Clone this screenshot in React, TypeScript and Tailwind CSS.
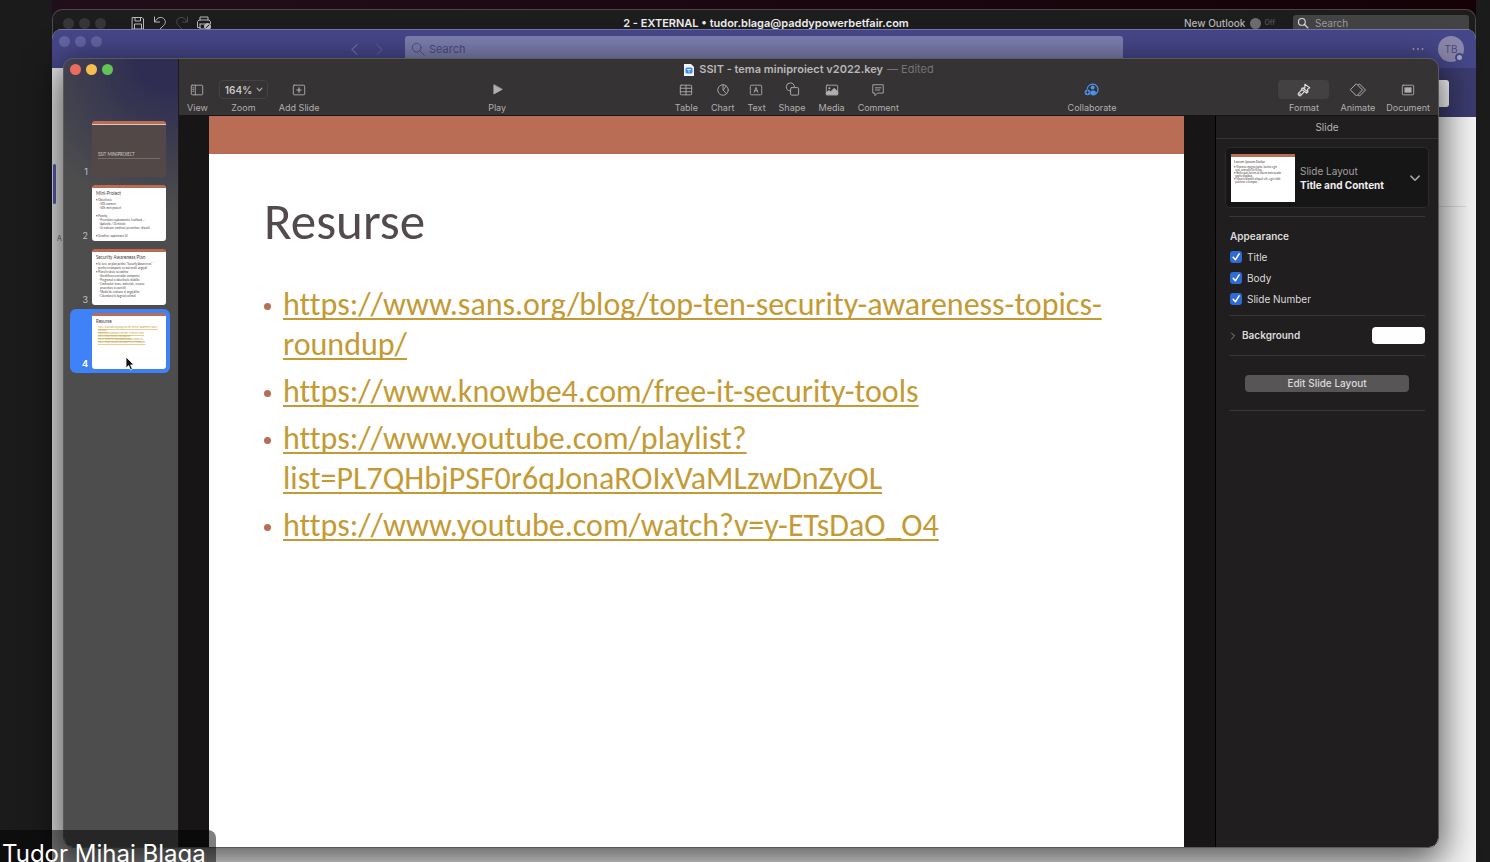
import type { ReactNode } from 'react';

const UI = "font-['Inter','Liberation_Sans',sans-serif]";
const SLIDE = "font-['Carlito','Calibri','Lato',sans-serif] [font-variant-ligatures:none]";

function Svg({ children, className = 'size-4' }: { children: ReactNode; className?: string }) {
  return (
    <svg viewBox="0 0 16 16" fill="none" stroke="currentColor" strokeWidth="1" strokeLinecap="round" strokeLinejoin="round" className={className} aria-hidden="true">
      {children}
    </svg>
  );
}

function Dots({ colors }: { colors: string[] }) {
  return (
    <div className="flex gap-[5px]">
      {colors.map((c, i) => (
        <span key={i} className={`size-[11px] rounded-full ${c}`} />
      ))}
    </div>
  );
}

function OutlookWindow() {
  return (
    <section className="absolute top-[9px] right-[14px] bottom-0 left-[52px] rounded-t-[10px] border border-b-0 border-[#4a4a4a] bg-[#1d1d1d]">
      <div className="grid h-[26px] grid-cols-[1fr_auto_1fr] items-center pr-[6px] pl-[10px]">
        <div className="flex items-center gap-6">
          <Dots colors={['bg-[#373737]', 'bg-[#373737]', 'bg-[#373737]']} />
          <div className="flex items-center gap-[6px] text-[#b9b9b9]">
            <button aria-label="Save"><Svg><path d="M2.500 2.500h9.500l1.500 1.500v10h-11zM5 2.500v3.500h5.500v-3.500M4.500 14v-5h7v5" /></Svg></button>
            <button aria-label="Undo"><Svg><path d="M2.500 2v5h5M2.800 6.800c2.500-4.500 6-5.300 8.500-3.500s2.700 4.700.5 7l-4 4" /></Svg></button>
            <button aria-label="Redo" className="text-[#4c4c4c]"><Svg><path d="M13.500 2v5h-5M13.200 6.800c-2.500-4.500-6-5.300-8.500-3.500s-2.700 4.700-.5 7l4 4" /></Svg></button>
            <button aria-label="Print"><Svg><path d="M4 5v-3h8v3M4 12.500h-2.500v-6l1.500-1.500h10l1.500 1.500v2M4 9h5M4 9v5h4" /><circle cx="11.500" cy="11.500" r="3.500" fill="currentColor" stroke="none" /><path d="M10 12.800l3-2.800" stroke="#1d1d1d" /></Svg></button>
          </div>
        </div>
        <h2 className="text-[11px] font-semibold text-[#ededed]">2 - EXTERNAL • tudor.blaga@paddypowerbetfair.com</h2>
        <div className="flex items-center justify-end">
          <span className="text-[10px] font-medium text-[#b4b4b4]">New Outlook</span>
          <button role="switch" aria-checked="false" aria-label="New Outlook" className="ml-[5px] flex items-center gap-[3px] text-[7px] font-semibold text-[#4f4f4f]">
            <span className="size-[11px] rounded-full bg-[#6d6d6d]" />Off
          </button>
          <label className="ml-[18px] flex h-[16px] w-[176px] items-center gap-[6px] rounded-[3px] bg-[#434343] px-1 text-[#dcdcdc]">
            <Svg className="size-3 shrink-0"><circle cx="6.500" cy="6.500" r="4.500" strokeWidth="1.500" /><path d="M10 10l4.500 4.500" strokeWidth="1.800" /></Svg>
            <input aria-label="Search mail" placeholder="Search" className="w-full min-w-0 bg-transparent text-[10px] placeholder:text-[#9b9b9b]" />
          </label>
        </div>
      </div>
    </section>
  );
}

function TeamsWindow() {
  return (
    <section className="absolute top-[29px] right-[14px] bottom-0 left-[52px] flex flex-col overflow-hidden rounded-t-[10px] bg-[#f5f5f5]">
      <header className="flex h-[39px] shrink-0 items-start border-t border-[#7576a8] bg-[#464789]">
        <div className="pt-[6px] pl-[7px]"><Dots colors={['bg-[#6465a3]', 'bg-[#6465a3]', 'bg-[#6465a3]']} /></div>
        <div className="ml-[245px] flex gap-2 pt-[11px]">
          <button aria-label="Back" className="text-[#8d8eb9]"><Svg><path d="M10 3.500l-5 5 5 5" /></Svg></button>
          <button aria-label="Forward" className="text-[#6a6ba4]"><Svg><path d="M6 3.500l5 5-5 5" /></Svg></button>
        </div>
        <label className="mt-[6px] ml-[18px] flex h-[26px] w-[718px] items-center gap-1 rounded-[3px] bg-[#7d7fb0] pl-[6px] text-[#4b4c82]">
          <Svg className="size-[14px] shrink-0"><circle cx="6.500" cy="6.500" r="5" /><path d="M10.300 10.300l5 5" /></Svg>
          <input aria-label="Search Teams" placeholder="Search" className="w-full bg-transparent text-[11px] placeholder:text-[#4b4c82]" />
        </label>
        <div className="ml-auto flex items-start gap-[14px] pr-3">
          <button aria-label="More" className="mt-[11px] text-[#a3a4c9]"><Svg className="h-4 w-3"><g fill="currentColor" stroke="none"><circle cx="2" cy="8" r="1.200" /><circle cx="8" cy="8" r="1.200" /><circle cx="14" cy="8" r="1.200" /></g></Svg></button>
          <div className="relative mt-[6px] grid size-[26px] place-items-center rounded-full bg-[#8c88ae] text-[10px] text-[#4b4a78]">
            TB
            <span className="absolute right-0 bottom-0 size-[9px] rounded-full border-2 border-[#464789] bg-[#a7a5c4]" />
          </div>
        </div>
      </header>
      <div className="flex flex-1">
        <nav className="flex w-12 flex-col bg-[#e9e9e9] pt-24">
          <span className="ml-px h-10 w-[3px] rounded bg-[#5a5cb0]" />
          <span className="mt-[30px] ml-[5px] text-[7px] text-[#5d5d5d]">A</span>
        </nav>
        <div className="flex flex-1 flex-col">
          <div className="flex h-[49px] items-start justify-end bg-[#3b3b6f] pt-3 pr-[27px]">
            <span className="h-[27px] w-12 rounded-[3px] bg-white" />
          </div>
          <div className="mr-[10px] h-[90px] border-b border-[#dadada]" />
        </div>
      </div>
    </section>
  );
}

function Tool({ label, children, className = '' }: { label: string; children: ReactNode; className?: string }) {
  return (
    <button className="flex flex-col items-center gap-[3px] text-[9px] leading-3 text-[#b1afaf]">
      <span className={`grid h-[19px] place-items-center ${className}`}>{children}</span>
      {label}
    </button>
  );
}

function Toolbar() {
  return (
    <header className="flex h-[57px] shrink-0 flex-col border-b border-[#171616] bg-[#353334]">
      <h1 className="flex h-[21px] items-center justify-center gap-1 text-[11px] text-[#b9b7b8]">
        <svg viewBox="0 0 12 12" className="size-3" aria-hidden="true">
          <path d="M1 0h7l3 3v9H1z" fill="#f2f4f8" /><rect x="2.500" y="3.500" width="7" height="6" rx="1.500" fill="#3c8bea" />
          <path d="M4 5.500h4M6 5.500v3" stroke="#fff" strokeWidth=".8" />
        </svg>
        <span className="font-semibold">SSIT - tema miniproiect v2022.key</span>
        <span className="text-[#757374]">— Edited</span>
      </h1>
      <div className="flex items-start pr-[8px] pl-2">
        <div className="flex gap-[11px]">
          <Tool label="View"><Svg className="size-[14px]"><rect x="1.500" y="2.500" width="13" height="11" rx="1" /><path d="M6 2.500v11M3.200 5.500h1M3.200 7.500h1M3.200 9.500h1" /></Svg></Tool>
          <div className="flex flex-col items-center gap-[3px] text-[9px] leading-3 text-[#b1afaf]">
            <div className="grid items-center">
              <select id="zoom" defaultValue="164%" className="col-start-1 row-start-1 h-[19px] w-[49px] appearance-none rounded-[4px] border border-[#444243] bg-transparent pl-[5px] text-[10px] font-semibold text-[#c9c7c8]">
                <option>100%</option>
                <option>164%</option>
              </select>
              <Svg className="pointer-events-none col-start-1 row-start-1 mr-[5px] size-[7px] justify-self-end"><path d="M2.500 5l5.500 6 5.500-6" strokeWidth="2.500" /></Svg>
            </div>
            <label htmlFor="zoom">Zoom</label>
          </div>
          <Tool label="Add Slide"><Svg className="size-[14px]"><rect x="1.500" y="2.500" width="13" height="11" rx="1" /><path d="M8 5.500v5M5.500 8h5" strokeWidth="1.400" /></Svg></Tool>
        </div>
        <span className="grow-[51]" />
        <Tool label="Play"><Svg className="size-[13px]"><path d="M3.500 2.500v11l10-5.500z" fill="currentColor" /></Svg></Tool>
        <span className="grow-[51]" />
        <div className="flex gap-[13px]">
          <Tool label="Table"><Svg className="size-[14px]"><rect x="1.500" y="2.500" width="13" height="11" rx="1" /><path d="M1.500 6h13M1.500 10h13M8 2.500v11" /></Svg></Tool>
          <Tool label="Chart"><Svg className="size-[14px]"><circle cx="8" cy="8" r="6" /><path d="M8 2v6l4.300 4.300M8.500 8l3-4.500" /></Svg></Tool>
          <Tool label="Text"><Svg className="size-[14px]"><rect x="1.500" y="2.500" width="13" height="11" rx="1" strokeDasharray="3 1" /><path d="M6 10.500l2-5.500 2 5.500M6.700 8.800h2.600" /></Svg></Tool>
          <Tool label="Shape"><Svg className="size-[15px]"><path d="M5 9.500a4.300 4.300 0 1 1 5-4.500" /><rect x="6" y="6" width="8.500" height="8" rx="1" /></Svg></Tool>
          <Tool label="Media"><Svg className="size-[14px]"><rect x="1.500" y="2.500" width="13" height="11" rx="1" /><circle cx="5" cy="6" r="1.200" fill="currentColor" stroke="none" /><path d="M1.500 13v-2l3-2.500 2 1.500 4-4 4 4v3z" fill="currentColor" /></Svg></Tool>
          <Tool label="Comment"><Svg className="size-[14px]"><path d="M2.500 2h11.500v9.500h-6.500l-3 3v-3h-2zM5 5.500h6.500M5 8h5" /></Svg></Tool>
        </div>
        <span className="grow-[51]" />
        <Tool label="Collaborate" className="text-[#4b95ee]"><Svg className="size-[15px]"><path d="M3.500 7a5.800 5.800 0 1 1 5.500 6.800" strokeWidth="1.300" /><circle cx="9.200" cy="5.800" r="2.100" fill="currentColor" stroke="none" /><path d="M7 13v-2.500c0-1.500 4.500-2.500 6 .5-1 1.800-3 2.800-6 2.500z" fill="currentColor" stroke="none" /><circle cx="3.800" cy="11" r="3.100" fill="currentColor" stroke="none" /><path d="M3.800 9.500v3M2.300 11h3" stroke="#353334" /></Svg></Tool>
        <span className="grow-[49]" />
        <div className="flex gap-[11px]">
          <Tool label="Format" className="w-[51px] rounded-[4px] bg-[#434142] text-[#e2e0e1]"><Svg className="size-[14px]"><path d="M9 1.500l5.500 4-2.500 1.500.5 3-1.500 1.500-6-4.500 1.300-1.500 2.700.2zM5.500 8l-3.700 3.500c-1.300 1.500 1 4 2.500 2.700l3.500-3.900M7 6l4.500 3.500" strokeWidth="1.300" /><circle cx="3.300" cy="12.600" r=".5" /></Svg></Tool>
          <Tool label="Animate"><Svg className="size-4"><path d="M6.500 2l6 6-6 6-6-6zM8.500 2.500l1-.500 6 6-6 6-1-.5" /></Svg></Tool>
          <Tool label="Document"><Svg className="size-[14px]"><rect x="1.500" y="2.500" width="13" height="11" rx="1" /><rect x="4" y="5" width="8" height="6" fill="currentColor" stroke="none" /></Svg></Tool>
        </div>
      </div>
    </header>
  );
}

const LINKS = [
  ['https://www.sans.org/blog/top-ten-security-awareness-topics-', 'roundup/'],
  ['https://www.knowbe4.com/free-it-security-tools'],
  ['https://www.youtube.com/playlist?', 'list=PL7QHbjPSF0r6qJonaROIxVaMLzwDnZyOL'],
  ['https://www.youtube.com/watch?v=y-ETsDaO_O4'],
];

function Thumb({ n, selected, dark, children }: { n: number; selected?: boolean; dark?: boolean; children: ReactNode }) {
  return (
    <li>
      <button className={`relative flex h-16 w-full items-end rounded-[6px] p-1 text-left ${selected ? 'bg-[#3f82f7]' : ''}`}>
        <span className={`w-[14px] text-right text-[9px] leading-[10px] ${selected ? 'font-bold text-white' : 'text-[#c2c2c2]'}`}>{n}</span>
        <span className={`ml-1 flex h-14 flex-1 flex-col overflow-hidden rounded-[3px] border-t-[3px] border-[#ba6d55] ${SLIDE} ${dark ? 'bg-[#524848] text-[#cfc6c2]' : 'bg-white text-[#4a4344]'}`}>
          {children}
        </span>
        {selected && (
          <svg viewBox="0 0 10 15" className="absolute top-[47px] left-[55px] h-[15px] w-[10px]" aria-hidden="true">
            <path d="M1 1v11l2.600-2.400 1.800 4.200 2-.900-1.800-4H9z" fill="#111" stroke="#fff" strokeWidth=".8" />
          </svg>
        )}
      </button>
    </li>
  );
}

function Lines({ title, items }: { title: string; items: string[] }) {
  return (
    <span className="flex flex-col px-1 pt-[2px]">
      <span className="text-[5px] leading-[6px]">{title}</span>
      <span className="mt-[2px] flex flex-col text-[3px] leading-[4px] whitespace-pre">
        {items.map((t, i) => <span key={i}>{t || ' '}</span>)}
      </span>
    </span>
  );
}

function Navigator() {
  return (
    <aside className="flex w-[115px] shrink-0 flex-col border-r border-[#1c1c1c] bg-[#4d4d4d] bg-[radial-gradient(ellipse_150px_150px_at_90%_0%,#2f2e52_20%,transparent)] pr-[8px] pl-[6px]">
      <div className="h-[58px] pt-[5px]"><Dots colors={['bg-[#ec6a5e]', 'bg-[#f4bf4f]', 'bg-[#61c454]']} /></div>
      <ol>
        <Thumb n={1} dark>
          <span className="border-t border-[#d9c9c0]" />
          <span className="mx-[6px] mt-[25px] border-b border-[#776c69] text-[5px] leading-[8px]">SSIT MINIPROIECT</span>
        </Thumb>
        <Thumb n={2}>
          <Lines title="Mini-Proiect" items={['• Obiectivele', '    - 50% examen', '    - 50% mini-proiect', '', '• Punctaj', '    - Prezentare saptamanala, feedback ...', '    - Aplicatie / 10 minute', '    - Se noteaza: continut, prezentare, discutii', '', '• Deadline: saptamana 14']} />
        </Thumb>
        <Thumb n={3}>
          <Lines title="Security Awareness Plan" items={['• Se cere un plan pentru "Security Awareness"', '   pentru o companie cu mai multi angajati', '• Planul trebuie sa contina', '    - Identificarea nevoilor companiei', '    - Programul si obiectivele stabilite', '    - Continutul: teme, materiale, resurse', '      prezentare si exercitii', '    - Modul de evaluare al angajatilor', '    - Calendarul si bugetul estimat']} />
        </Thumb>
        <Thumb n={4} selected>
          <span className="px-1 pt-[2px] text-[5px] leading-[6px]">Resurse</span>
          <span className={`mt-[2px] ml-[6px] flex flex-col text-[2px] leading-[3px] text-[#c49a35] ${UI}`}>
            {LINKS.flat().map((t) => <span key={t}><span className="underline decoration-[#c49a35]/50">{t}</span></span>)}
          </span>
        </Thumb>
      </ol>
    </aside>
  );
}

function Slide() {
  return (
    <main className="flex min-w-0 flex-1 bg-[#171516] pr-[31px] pl-[30px]">
      <article className={`flex-1 border-t-[38px] border-[#ba6d55] bg-white pt-[38px] pr-[50px] pl-[55px] ${SLIDE}`}>
        <h2 className="text-[51px] leading-[60px] text-[#524a4c]">Resurse</h2>
        <ul className="mt-[33px] flex flex-col gap-[7px] text-[32px] leading-10">
          {LINKS.map((parts) => (
            <li key={parts[0]} className="flex items-start gap-[12px]">
              <span className="mt-[18px] size-[7px] shrink-0 rounded-full bg-[#ba6d55]" />
              <a href={parts.join('')} className="text-[#c49a35] underline decoration-2 underline-offset-[3px] [text-decoration-skip-ink:none]">
                {parts.map((p) => <span key={p} className="block whitespace-nowrap">{p}</span>)}
              </a>
            </li>
          ))}
        </ul>
      </article>
    </main>
  );
}

function Check({ label }: { label: string }) {
  return (
    <label className="flex items-center gap-[5px] text-[10px] leading-3">
      <span className="grid size-3 place-items-center">
        <input type="checkbox" defaultChecked className="peer col-start-1 row-start-1 size-3 appearance-none rounded-[3px] bg-[#55575a] checked:bg-[#2f6bd8]" />
        <Svg className="pointer-events-none invisible col-start-1 row-start-1 size-[10px] text-white peer-checked:visible"><path d="M3.500 8.500l3.500 4 6-9.500" strokeWidth="2.400" /></Svg>
      </span>
      {label}
    </label>
  );
}

function Inspector() {
  return (
    <aside className="flex w-[223px] shrink-0 flex-col border-l border-black bg-[#201e1f] text-[#dddbdc]">
      <h2 className="h-[23px] border-b border-[#353334] text-center text-[10px] leading-[22px] text-[#b5b3b4]">Slide</h2>
      <button className="mx-[9px] mt-2 flex h-[61px] items-center rounded-[5px] border border-[#2d2b2c] bg-[#171616] px-[5px] text-left">
        <span className={`flex h-12 w-16 flex-col overflow-hidden border-t-[3px] border-[#ba6d55] bg-white pl-[3px] text-[#4a4344] ${SLIDE}`}>
          <span className="mt-[2px] text-[4px] leading-[5px]">Lorem Ipsum Dolor</span>
          <span className="mt-[2px] flex flex-col text-[3px] leading-[3px] whitespace-pre">
            <span>• Vivamus magna justo, lacinia eget</span>
            <span>  sed, convallis at tellus.</span>
            <span>• Nulla quis lorem ut libero malesuada</span>
            <span>  porta dapibus.</span>
            <span>• Mauris blandit aliquet elit, eget nibh</span>
            <span>  pulvinar a tempor.</span>
          </span>
        </span>
        <span className="ml-[5px] flex flex-1 flex-col text-[10px] leading-[14px]">
          <span className="text-[#a19fa0]">Slide Layout</span>
          <span className="font-bold text-[#efedee]">Title and Content</span>
        </span>
        <Svg className="mr-[2px] size-3 text-[#a9a7a8]"><path d="M2.500 5.500l5.500 5.500 5.500-5.500" strokeWidth="2" /></Svg>
      </button>
      <div role="group" aria-label="Slide elements" className="mx-[13px] mt-2 flex h-[99px] flex-col gap-[9px] border-t border-[#383637] px-px pt-[13px]">
        <h3 className="text-[10px] leading-3 font-semibold">Appearance</h3>
        <Check label="Title" />
        <Check label="Body" />
        <Check label="Slide Number" />
      </div>
      <div className="mx-[13px] flex h-[40px] items-center justify-between border-t border-[#383637]">
        <button className="flex items-center gap-[5px] text-[10px] font-semibold">
          <Svg className="size-2 text-[#8d8b8c]"><path d="M5 2l6 6-6 6" strokeWidth="2" /></Svg>
          Background
        </button>
        <button aria-label="Background color" className="h-[17px] w-[53px] rounded-[4px] bg-white" />
      </div>
      <div className="mx-[13px] flex h-[56px] items-center border-y border-[#383637]">
        <button className="mx-4 h-[17px] flex-1 rounded-[4px] bg-[#575556] text-[10px] font-medium">Edit Slide Layout</button>
      </div>
    </aside>
  );
}

export default function App() {
  return (
    <div className={`relative h-screen overflow-hidden bg-[#1b1b1b] ${UI}`}>
      <div className="mr-[14px] ml-[52px] h-10 bg-linear-to-r from-[#220e1a] to-[#160107]" />
      <OutlookWindow />
      <TeamsWindow />
      <section className="absolute top-[58px] right-[51px] bottom-[14px] left-[63px] flex overflow-hidden rounded-[10px] border border-[#5b595a] shadow-[0_10px_36px_4px_rgba(0,0,0,0.65)]">
        <Navigator />
        <div className="flex min-w-0 flex-1 flex-col">
          <Toolbar />
          <div className="flex min-h-0 flex-1">
            <Slide />
            <Inspector />
          </div>
        </div>
      </section>
      <div className="absolute bottom-0 left-0 h-8 w-[216px] overflow-hidden rounded-tr-[8px] bg-black/50 pt-2 pl-[2px] text-2xl whitespace-nowrap text-white">Tudor Mihai Blaga</div>
    </div>
  );
}
